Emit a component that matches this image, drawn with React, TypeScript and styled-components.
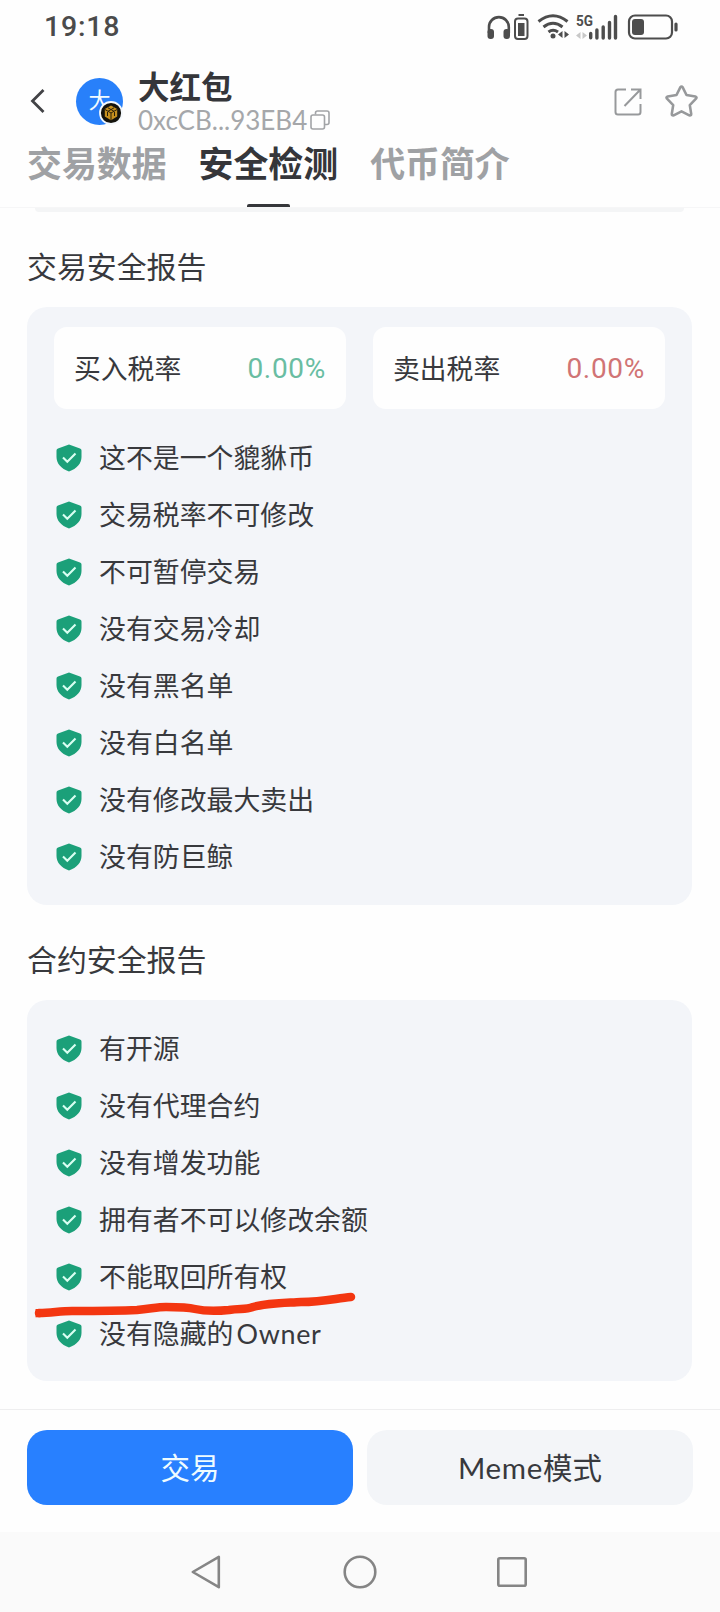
import React from 'react';
import styled, { createGlobalStyle } from 'styled-components';

const GlobalStyle = createGlobalStyle`
  *, *::before, *::after { box-sizing: border-box; }
  body {
    margin: 0;
    background: #fefefe;
    color: #38393d;
    font-family: Lato, "Noto Sans CJK SC", sans-serif;
  }
  button { font: inherit; color: inherit; border: 0; padding: 0; background: none; }
  h1, h2, ul { margin: 0; padding: 0; font-weight: inherit; list-style: none; }
  svg { display: block; flex: none; }
`;

const Screen = styled.div`
  width: 720px;
  height: 1612px;
  display: flex;
  flex-direction: column;
  overflow: hidden;
  background: #fefefe;
`;

const StatusBar = styled.div`
  height: 56px;
  padding: 0 41px 2px 44px;
  display: flex;
  align-items: center;
  justify-content: space-between;
`;

const Clock = styled.span`
  font: 500 28.5px/54px Roboto, sans-serif;
  letter-spacing: 0.8px;
  color: #4b4b4b;
`;

const Header = styled.header`
  height: 78px;
  padding: 12px 22px 0 27px;
  display: flex;
  align-items: center;
`;

const BackButton = styled.button`
  width: 49px;
  height: 48px;
`;

const Avatar = styled.div`
  position: relative;
  width: 47px;
  height: 47px;
  border-radius: 50%;
  background: #2880fa;
  color: #f2fbff;
  font-size: 22px;
  line-height: 44px;
  text-align: center;
`;

const ChainBadge = styled.svg`
  position: absolute;
  right: 0;
  bottom: 0;
`;

const Identity = styled.div`
  flex: 1;
  padding: 2px 0 0 15px;
`;

const TokenName = styled.h1`
  font-size: 31.5px;
  font-weight: 700;
  line-height: 36px;
  height: 35px;
  color: #35363a;
`;

const Address = styled.div`
  display: flex;
  align-items: center;
  gap: 3px;
  height: 32px;
  font-size: 26px;
  line-height: 32px;
  color: #a5a7aa;
`;

const Actions = styled.div`
  display: flex;
  align-items: center;
  gap: 23px;
  padding-top: 1px;
  color: #97999b;
`;

const Tabs = styled.nav`
  height: 73px;
  padding: 0 27px;
  display: flex;
  gap: 32px;
`;

const Tab = styled.button<{ $active?: boolean }>`
  display: flex;
  flex-direction: column;
  align-items: center;
  justify-content: space-between;
  font-size: 34.9px;
  font-weight: 700;
  line-height: 60px;
  height: 73px;
  color: ${p => (p.$active ? '#35363a' : '#9fa1a4')};
  &::after {
    content: '';
    width: 43px;
    height: 3px;
    border-radius: 2px 2px 0 0;
    background: ${p => (p.$active ? '#35363a' : 'transparent')};
  }
`;

const Content = styled.main`
  flex: 1;
  border-top: 1px solid #f6f6f7;
  padding: 0 28px 0 27px;
`;

const PreviousPanelEdge = styled.div`
  height: 4px;
  margin: 0 8px 25px;
  border-radius: 0 0 12px 12px;
  background: #f4f5f6;
`;

const SectionTitle = styled.h2<{ $offset?: number }>`
  height: 70px;
  margin-top: ${p => p.$offset ?? 0}px;
  font-size: 29.9px;
  line-height: 59px;
`;

const Panel = styled.section<{ $height: number; $top: number }>`
  position: relative;
  height: ${p => p.$height}px;
  padding: ${p => p.$top}px 27px 0;
  border-radius: 20px;
  background: #f3f5f9;
`;

const TaxRow = styled.div`
  display: grid;
  grid-template-columns: 1fr 1fr;
  gap: 27px;
  margin-bottom: 20px;
`;

const TaxCard = styled.div`
  height: 82px;
  padding: 0 20px 2px;
  display: flex;
  align-items: center;
  justify-content: space-between;
  border-radius: 13px;
  background: #fefefe;
  font-size: 26.8px;
`;

const TaxValue = styled.span<{ $tone: 'buy' | 'sell' }>`
  padding-top: 2px;
  font-family: Roboto, sans-serif;
  font-size: 28px;
  letter-spacing: 0.7px;
  font-weight: 400;
  color: ${p => (p.$tone === 'buy' ? '#69bda2' : '#d17475')};
`;

const CheckRow = styled.li`
  height: 57px;
  display: flex;
  align-items: center;
  padding-left: 2px;
  font-size: 26.9px;
  line-height: 57px;
  svg { margin-right: 17px; }
`;

const Latin = styled.span<{ $before?: number }>`
  margin-left: ${p => p.$before ?? 0}px;
  letter-spacing: 0.7px;
`;

const Marker = styled.svg`
  position: absolute;
  left: 0;
  top: 286px;
`;

const Footer = styled.footer`
  height: 123px;
  padding: 20px 27px 0;
  border-top: 1px solid #eeeeef;
  display: grid;
  grid-template-columns: 1fr 1fr;
  gap: 14px;
`;

const ActionButton = styled.button<{ $primary?: boolean }>`
  height: 75px;
  border-radius: 20px;
  font-size: 29.5px;
  line-height: 75px;
  background: ${p => (p.$primary ? '#2880ff' : '#f3f5f8')};
  color: ${p => (p.$primary ? '#effcff' : '#38393d')};
`;

const NavBar = styled.div`
  height: 80px;
  display: flex;
  align-items: center;
  justify-content: center;
  gap: 116px;
  background: #fafafa;
`;

const StatusIcons = () => (
  <svg width="194" height="30" viewBox="486 12 194 30" fill="none" stroke="#4d4d4d">
    <path d="M490 33v-6a9.700 9.700 0 0 1 19.800 0v6" strokeWidth="2.600" />
    <rect x="488.500" y="29" width="6.500" height="10" rx="3" fill="#4d4d4d" stroke="none" />
    <rect x="504.500" y="29" width="6.500" height="10" rx="3" fill="#4d4d4d" stroke="none" />
    <rect x="516" y="18.500" width="12.500" height="20.500" rx="3" strokeWidth="2" />
    <path d="M519.500 15h5.500" strokeWidth="2" />
    <rect x="519" y="23" width="6.500" height="13" fill="#4d4d4d" stroke="none" />
    <path d="M539.500 21.500q14.500-11.500 29 0M544.500 27q9.500-7.500 19 0M549.500 32q4.500-3.500 9.500 0" strokeWidth="3" />
    <circle cx="554" cy="36" r="2.500" fill="#4d4d4d" stroke="none" />
    <path d="M563.500 31v7l-4.500-3.500zM565.500 31v7l4.500-3.500z" fill="#4d4d4d" stroke="none" />
    <text x="577" y="26" fontFamily="Roboto" fontSize="15.500" fontWeight="700" fill="#4d4d4d" stroke="none" textLength="17" lengthAdjust="spacingAndGlyphs">5G</text>
    <path d="M581.500 32v7l-4.500-3.500zM583.500 32v7l4.500-3.500z" fill="#c8c8c8" stroke="none" />
    <path d="M591.700 33.500v4.300M597.900 30v8M604.200 27v11M610.500 22.500V38M616.500 16.500V38" strokeWidth="3.400" strokeLinecap="round" />
    <rect x="630" y="15.500" width="43" height="23" rx="6" strokeWidth="2.200" />
    <rect x="633" y="19" width="12" height="16" rx="3" fill="#4d4d4d" stroke="none" />
    <path d="M677 24v6" strokeWidth="3.200" strokeLinecap="round" />
  </svg>
);

const ShieldCheck = () => (
  <svg width="26" height="28" viewBox="0 0 26 28">
    <path d="M13 .5 24 4.500Q25.500 5 25.500 6.500V13c0 6.500-4.500 11.500-12.500 14.500C5 24.500.5 19.500.5 13V6.500Q.5 5 2 4.500z" fill="#1ba079" />
    <path d="m7 13.500 4.300 4.300 8.200-8.200" fill="none" stroke="#d9fff2" strokeWidth="2.100" />
  </svg>
);

const Checks = ({ items }: { items: React.ReactNode[] }) => (
  <ul>
    {items.map((item, i) => (
      <CheckRow key={i}>
        <ShieldCheck />
        {item}
      </CheckRow>
    ))}
  </ul>
);

const tradeChecks = [
  '这不是一个貔貅币',
  '交易税率不可修改',
  '不可暂停交易',
  '没有交易冷却',
  '没有黑名单',
  '没有白名单',
  '没有修改最大卖出',
  '没有防巨鲸',
];

const contractChecks = [
  '有开源',
  '没有代理合约',
  '没有增发功能',
  '拥有者不可以修改余额',
  '不能取回所有权',
  <>没有隐藏的<Latin $before={3}>Owner</Latin></>,
];

export default function App() {
  return (
    <Screen>
      <GlobalStyle />
      <StatusBar>
        <Clock>19:18</Clock>
        <StatusIcons />
      </StatusBar>
      <Header>
        <BackButton aria-label="返回">
          <svg width="24" height="48" viewBox="0 0 24 48" fill="none" stroke="#424346" strokeWidth="2.800">
            <path d="M16.500 13 5.500 24l11 11" />
          </svg>
        </BackButton>
        <Avatar>
          大
          <ChainBadge width="24" height="24" viewBox="0 0 24 24">
            <circle cx="12" cy="12" r="11" fill="#14130d" stroke="#f4f8fc" strokeWidth="1.800" />
            <path d="m12 4.500 6.200 3.500v7.500L12 19.300l-6.200-3.800V8z" fill="#c6901f" />
            <path d="m6 8.500 6 3.500 6-3.500M12 12v7M9 6.800l6 3.500M15 6.800l-6 3.500M8.500 11v4M15.500 11v4" fill="none" stroke="#2a2009" strokeWidth="1" />
          </ChainBadge>
        </Avatar>
        <Identity>
          <TokenName>大红包</TokenName>
          <Address>
            0xcCB...93EB4
            <svg width="20" height="20" viewBox="0 0 20 20" fill="none" stroke="#a2a4a7" strokeWidth="1.600">
              <rect x="1" y="5" width="13.500" height="14" rx="2" />
              <path d="M5.500 4.500V3q0-2 2-2H17q2 0 2 2v9.500q0 2-2 2h-2" />
            </svg>
          </Address>
        </Identity>
        <Actions>
          <svg width="28" height="28" viewBox="0 0 28 28" fill="none" stroke="currentColor" strokeWidth="2">
            <path d="M12 1.500H4Q1.500 1.500 1.500 4v20q0 2.500 2.500 2.500h20q2.500 0 2.500-2.500v-8M17 1.500h9.500V11M26 2 10.500 18" />
          </svg>
          <svg width="33" height="33" viewBox="0 0 33 33" fill="none" stroke="currentColor" strokeWidth="2.600" strokeLinejoin="round">
            <path d="M15.300 2.300q1.200-1.600 2.400 0L21.500 10l8.800 1.500q2 .6.700 2.200l-6.200 6.400 1.400 8.800q0 2-1.900 1.400L16.500 26.400l-7.800 3.900q-1.900.6-1.900-1.400l1.400-8.800L2 13.700q-1.300-1.600.7-2.200L11.500 10z" />
          </svg>
        </Actions>
      </Header>
      <Tabs>
        <Tab>交易数据</Tab>
        <Tab $active>安全检测</Tab>
        <Tab>代币简介</Tab>
      </Tabs>
      <Content>
        <PreviousPanelEdge />
        <SectionTitle>交易安全报告</SectionTitle>
        <Panel $height={598} $top={20}>
          <TaxRow>
            <TaxCard>
              买入税率<TaxValue $tone="buy">0.00%</TaxValue>
            </TaxCard>
            <TaxCard>
              卖出税率<TaxValue $tone="sell">0.00%</TaxValue>
            </TaxCard>
          </TaxRow>
          <Checks items={tradeChecks} />
        </Panel>
        <SectionTitle $offset={25}>合约安全报告</SectionTitle>
        <Panel $height={381} $top={20}>
          <Checks items={contractChecks} />
          <Marker width="340" height="45" viewBox="27 1286 340 45">
            <path
              d="M39 1313C51 1313 60 1311 72 1311C96 1311 117 1311 137 1310C150 1309 157 1307 166 1307C179 1307 187 1307 195 1309C208 1312 219 1311 229 1310C240 1308 245 1310 253 1307C267 1303 286 1303 301 1302C324 1302 337 1298 351 1297"
              fill="none"
              stroke="#f33611"
              strokeWidth="8.500"
              strokeLinecap="round"
              strokeLinejoin="round"
            />
            <path d="M35.500 1309h5v8.300h-5z" fill="#f33611" />
          </Marker>
        </Panel>
      </Content>
      <Footer>
        <ActionButton $primary>交易</ActionButton>
        <ActionButton><Latin>Meme</Latin>模式</ActionButton>
      </Footer>
      <NavBar>
        <svg width="36" height="36" viewBox="0 0 36 36" fill="none" stroke="#858585" strokeWidth="2.600" strokeLinejoin="round">
          <path d="M28.800 2.800v30.400L2.800 18z" />
        </svg>
        <svg width="36" height="36" viewBox="0 0 36 36" fill="none" stroke="#858585" strokeWidth="2.600">
          <circle cx="18" cy="18" r="15.300" />
        </svg>
        <svg width="36" height="36" viewBox="0 0 36 36" fill="none" stroke="#858585" strokeWidth="2.600">
          <rect x="4.300" y="4.300" width="27.400" height="27.400" rx="1.500" />
        </svg>
      </NavBar>
    </Screen>
  );
}
